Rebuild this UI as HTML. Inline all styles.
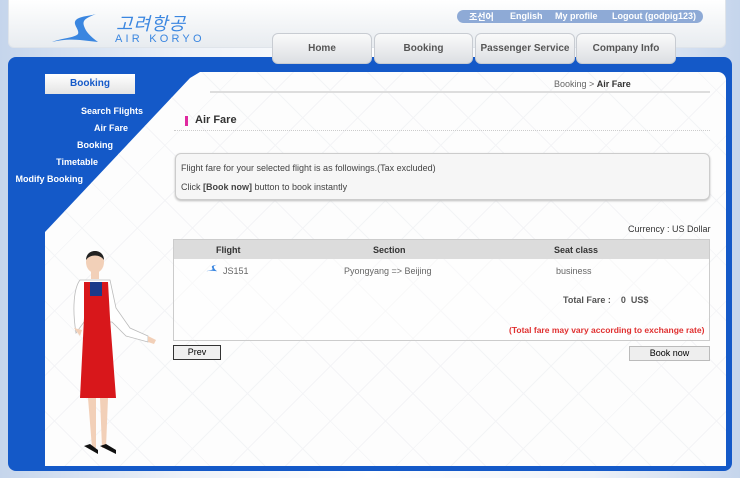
<!DOCTYPE html>
<html><head><meta charset="utf-8"><style>
*{margin:0;padding:0;box-sizing:border-box}
body{width:740px;height:478px;overflow:hidden;font-family:"Liberation Sans",Arial,sans-serif;background:linear-gradient(90deg,#c5d5ec 0,#eef2f8 25%,#fff 50%,#eef2f8 80%,#c5d5ec 100%);position:relative}
.hdr{position:absolute;left:8px;top:0;width:718px;height:48px;background:linear-gradient(#fff,#e8ecf0);border-radius:0 0 6px 6px;border:1px solid #dfe4ea;border-top:none}
.top{position:absolute;left:457px;top:10px;width:246px;height:13px;background:#8eaad6;border-radius:7px;font-size:9px;font-weight:bold;color:#fff;line-height:13px}
.top span{position:absolute}
.tab{position:absolute;top:33px;height:31px;background:linear-gradient(#fafafa,#dcdfe3);border:1px solid #c8ccd2;border-radius:6px;font-size:10px;font-weight:bold;color:#555;text-align:center;line-height:30px}
.frame{position:absolute;left:8px;top:57px;width:724px;height:414px;background:#1459c8;border-radius:8px}
.white{position:absolute;left:45px;top:72px;width:681px;height:394px;background:#fdfdfd;clip-path:polygon(155px 0,100% 0,100% 100%,0 100%,0 160px,145px 6px);border-radius:0 8px 0 0}
.pat{position:absolute;inset:0;background-image:repeating-linear-gradient(45deg,transparent 0 38px,#f3f4f6 38px 39px),repeating-linear-gradient(-45deg,transparent 0 38px,#f3f4f6 38px 39px)}
.side{position:absolute;color:#fff;font-size:9px;font-weight:bold;text-align:right}
.t{position:absolute;font-size:9px;color:#444}
</style></head><body>
<div class="hdr"></div>
<svg style="position:absolute;left:50px;top:12px" width="60" height="36" viewBox="0 0 60 36"><path d="M46 2 C36 6 32 8 34 14 C36 20 40 24 48 30 L30 28 C20 27 10 28 2 30 C12 26 24 26 28 22 C30 18 22 12 26 8 C30 4 40 4 46 2Z" fill="#3a86e0"/></svg>
<div style="position:absolute;left:116px;top:10px;font-size:18px;color:#3a86e0;font-style:italic;font-family:'Noto Sans CJK KR',sans-serif;letter-spacing:1px">고려항공</div>
<div style="position:absolute;left:115px;top:33px;font-size:11px;color:#3a86e0;letter-spacing:3.2px">AIR KORYO</div>
<div class="top"><span style="left:12px;font-family:'Noto Sans CJK KR',sans-serif">조선어</span><span style="left:53px">English</span><span style="left:98px">My profile</span><span style="left:155px">Logout (godpig123)</span></div>
<div class="frame"></div>
<div class="tab" style="left:272px;width:100px">Home</div>
<div class="tab" style="left:374px;width:99px">Booking</div>
<div class="tab" style="left:475px;width:100px">Passenger Service</div>
<div class="tab" style="left:576px;width:100px">Company Info</div>
<div class="white"><div class="pat"></div></div>
<div style="position:absolute;left:45px;top:74px;width:90px;height:20px;background:linear-gradient(#fff,#e4e4e4);color:#1459c8;font-size:10px;font-weight:bold;text-align:center;line-height:20px">Booking</div>
<div class="side" style="right:597px;top:106px">Search Flights</div>
<div class="side" style="right:612px;top:123px">Air Fare</div>
<div class="side" style="right:627px;top:140px">Booking</div>
<div class="side" style="right:642px;top:157px">Timetable</div>
<div class="side" style="right:657px;top:174px">Modify Booking</div>
<div style="position:absolute;left:210px;top:91px;width:500px;height:2px;background:#ddd"></div>
<div class="t" style="left:554px;top:79px;color:#666">Booking &gt; <b style="color:#333">Air Fare</b></div>
<div style="position:absolute;left:185px;top:116px;width:3px;height:10px;background:#e02aa0"></div>
<div style="position:absolute;left:195px;top:114px;font-size:11px;font-weight:bold;color:#333">Air Fare</div>
<div style="position:absolute;left:174px;top:130px;width:536px;border-top:1px dotted #ccc"></div>
<div style="position:absolute;left:175px;top:153px;width:535px;height:47px;border:1px solid #ccc;border-radius:6px;background:#f6f6f6;box-shadow:0 1px 2px #bbb"></div>
<div class="t" style="left:181px;top:163px">Flight fare for your selected flight is as followings.(Tax excluded)</div>
<div class="t" style="left:181px;top:182px">Click <b>[Book now]</b> button to book instantly</div>
<div class="t" style="left:628px;top:224px;color:#333">Currency : US Dollar</div>
<div style="position:absolute;left:173px;top:239px;width:537px;height:102px;border:1px solid #ccc;background:rgba(255,255,255,.4)"></div>
<div style="position:absolute;left:174px;top:240px;width:535px;height:19px;background:#dcdcdc"></div>
<div class="t" style="left:216px;top:245px;font-weight:bold;color:#333">Flight</div>
<div class="t" style="left:373px;top:245px;font-weight:bold;color:#333">Section</div>
<div class="t" style="left:554px;top:245px;font-weight:bold;color:#333">Seat class</div>
<svg style="position:absolute;left:206px;top:263px" width="14" height="11" viewBox="0 0 60 36"><path d="M46 2 C36 6 32 8 34 14 C36 20 40 24 48 30 L30 28 C20 27 10 28 2 30 C12 26 24 26 28 22 C30 18 22 12 26 8 C30 4 40 4 46 2Z" fill="#3a86e0"/></svg>
<div class="t" style="left:223px;top:266px;color:#666">JS151</div>
<div class="t" style="left:344px;top:266px;color:#666">Pyongyang =&gt; Beijing</div>
<div class="t" style="left:556px;top:266px;color:#666">business</div>
<div class="t" style="left:563px;top:295px;color:#555;font-weight:bold">Total Fare :&nbsp;&nbsp;&nbsp; 0&nbsp; US$</div>
<div class="t" style="left:509px;top:325px;color:#e03030;font-weight:bold;font-size:8.5px">(Total fare may vary according to exchange rate)</div>
<div style="position:absolute;left:173px;top:345px;width:48px;height:15px;border:1px solid #333;background:#f0f0f0;font-size:9px;text-align:center;line-height:13px">Prev</div>
<div style="position:absolute;left:629px;top:346px;width:81px;height:15px;border:1px solid #bbb;background:#eee;font-size:9px;text-align:center;line-height:13px">Book now</div>
<svg style="position:absolute;left:70px;top:248px" width="90" height="215" viewBox="0 0 90 215">
<ellipse cx="25" cy="14" rx="9" ry="11" fill="#f2d0b8"/><path d="M16 12 C16 0 34 0 34 12 C30 6 20 6 16 12Z" fill="#222"/>
<rect x="21" y="23" width="8" height="8" fill="#f2d0b8"/>
<path d="M10 32 L40 32 L46 60 L60 80 L78 88 L78 94 L56 88 L42 74 L14 74 L6 85 C2 60 4 40 10 32Z" fill="#fff" stroke="#bbb" stroke-width="0.8"/>
<path d="M78 88 L86 92 L84 96 L78 94Z" fill="#f2d0b8"/>
<path d="M4 80 L10 88 L12 82Z" fill="#f2d0b8"/>
<path d="M14 34 L38 34 L40 70 L46 150 L10 150 L14 70Z" fill="#d8171b"/>
<rect x="20" y="34" width="12" height="14" fill="#1a3a8a"/>
<path d="M18 150 L22 200 L26 200 L26 150Z M30 150 L32 200 L36 200 L38 150Z" fill="#f2d0b8"/>
<path d="M14 198 L28 206 L28 202 L20 196Z M30 198 L46 206 L46 202 L36 196Z" fill="#111"/>
</svg>
</body></html>
